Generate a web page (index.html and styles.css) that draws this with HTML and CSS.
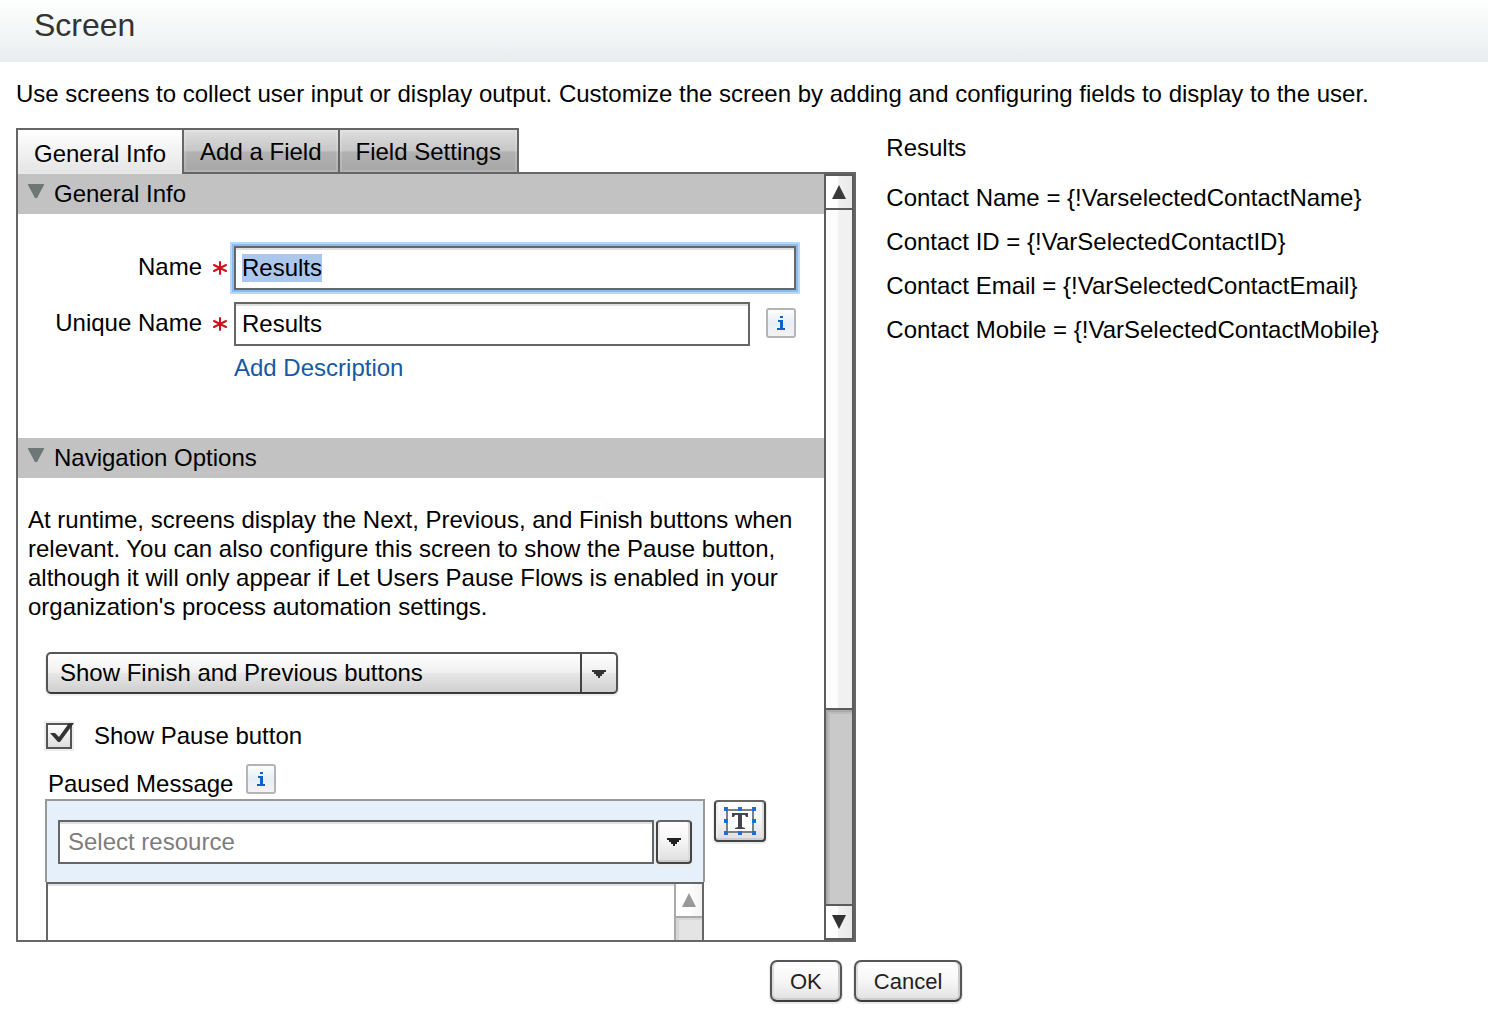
FILE: index.html
```
<!DOCTYPE html>
<html lang="en">
<head>
    <meta charset="UTF-8">
    <meta name="viewport" content="width=device-width, initial-scale=1.0">
    <title>Screen</title>
    <link rel="stylesheet" href="styles.css">
</head>
<body>
    <header class="dialog-header">
        <h1 class="dialog-title">Screen</h1>
    </header>

    <main class="dialog-body">
        <p class="intro">Use screens to collect user input or display output. Customize the screen by adding and configuring fields to display to the user.</p>

        <div class="columns">
            <div class="editor">
                <div class="tabs" role="tablist">
                    <button type="button" class="tab active" role="tab" aria-selected="true">General Info</button>
                    <button type="button" class="tab" role="tab" aria-selected="false">Add a Field</button>
                    <button type="button" class="tab" role="tab" aria-selected="false">Field Settings</button>
                </div>

                <div class="panel">
                    <div class="panel-content">
                        <h2 class="section-title">
                            <svg class="twisty" viewBox="0 0 16 14"><path d="M0 0h16v1L9 14H7L0 1z" fill="#6d7776"/></svg>
                            General Info
                        </h2>
                        <div class="general-form">
                            <div class="form-row">
                                <label for="name">Name <svg class="required" viewBox="0 0 14 14"><path d="M7 7V1M7 7v6M7 7L1 4M7 7l6-3M7 7l-6 3M7 7l6 3" stroke="#d0101c" stroke-width="2" stroke-linecap="round"/></svg></label>
                                <input type="text" id="name" class="text-input" value="Results" autofocus>
                            </div>
                            <div class="form-row">
                                <label for="unique-name">Unique Name <svg class="required" viewBox="0 0 14 14"><path d="M7 7V1M7 7v6M7 7L1 4M7 7l6-3M7 7l-6 3M7 7l6 3" stroke="#d0101c" stroke-width="2" stroke-linecap="round"/></svg></label>
                                <input type="text" id="unique-name" class="text-input" value="Results">
                                <button type="button" class="info-btn" aria-label="Unique name help">
                                    <svg viewBox="0 0 8 14"><path d="M3 0h3v2H3zM1 4h5v8h2v2H0v-2h3V6H1z" fill="#0b62cc"/></svg>
                                </button>
                            </div>
                            <a href="#" class="add-description">Add Description</a>
                        </div>

                        <h2 class="section-title">
                            <svg class="twisty" viewBox="0 0 16 14"><path d="M0 0h16v1L9 14H7L0 1z" fill="#6d7776"/></svg>
                            Navigation Options
                        </h2>
                        <div class="navigation-form">
                            <p class="help-text">At runtime, screens display the Next, Previous, and Finish buttons when relevant. You can also configure this screen to show the Pause button, although it will only appear if Let Users Pause Flows is enabled in your organization's process automation settings.</p>

                            <div class="select-box">
                                <select aria-label="Navigation buttons">
                                    <option>Show Finish and Previous buttons</option>
                                </select>
                                <span class="select-arrow">
                                    <svg class="caret" viewBox="0 0 14 8"><path d="M0 0h14v2h-2v2h-2v2H8v2H6V6H4V4H2V2H0z" fill="#333"/></svg>
                                </span>
                            </div>

                            <div class="check-row">
                                <span class="check-box">
                                    <input type="checkbox" id="show-pause" checked>
                                    <svg class="check-mark" viewBox="0 0 28 28"><path d="M4 10h5l4 4L23 0h5L14 19h-2z" fill="#333"/></svg>
                                </span>
                                <label for="show-pause">Show Pause button</label>
                            </div>

                            <div class="paused-label">
                                <label for="paused-message">Paused Message</label>
                                <button type="button" class="info-btn" aria-label="Paused message help">
                                    <svg viewBox="0 0 8 14"><path d="M3 0h3v2H3zM1 4h5v8h2v2H0v-2h3V6H1z" fill="#0b62cc"/></svg>
                                </button>
                            </div>

                            <div class="message-row">
                                <div class="message-editor">
                                    <div class="resource-bar">
                                        <input type="text" class="text-input" placeholder="Select resource" aria-label="Select resource">
                                        <button type="button" class="drop-btn" aria-label="Open resources">
                                            <svg class="caret" viewBox="0 0 14 8"><path d="M0 0h14v2h-2v2h-2v2H8v2H6V6H4V4H2V2H0z" fill="#222"/></svg>
                                        </button>
                                    </div>
                                    <div class="message-area">
                                        <textarea id="paused-message"></textarea>
                                        <div class="mini-scroll">
                                            <div class="mini-scroll-btn">
                                                <svg viewBox="0 0 14 14"><path d="M7 0l7 14H0z" fill="#999"/></svg>
                                            </div>
                                            <div class="mini-scroll-track"></div>
                                        </div>
                                    </div>
                                </div>
                                <button type="button" class="text-btn" aria-label="Toggle rich text">
                                    <svg viewBox="0 0 32 28">
                                        <rect x="3" y="3" width="26" height="22" fill="#fff" stroke="#7c8080" stroke-width="2"/>
                                        <path d="M8 6h16v4h-2l-1-2h-3v12l3 1v1H11v-1l3-1V8h-3l-1 2H8z" fill="#45454f"/>
                                        <path d="M0 0h4v4H0zM14 0h4v4h-4zM28 0h4v4h-4zM0 12h4v4H0zM28 12h4v4h-4zM0 24h4v4H0zM14 24h4v4h-4zM28 24h4v4h-4z" fill="#1672d8"/>
                                    </svg>
                                </button>
                            </div>
                        </div>
                    </div>

                    <div class="scrollbar">
                        <div class="scroll-btn">
                            <svg viewBox="0 0 14 14"><path d="M7 0l7 14H0z" fill="#3a3a3a"/></svg>
                        </div>
                        <div class="scroll-thumb"></div>
                        <div class="scroll-track"></div>
                        <div class="scroll-btn">
                            <svg viewBox="0 0 14 14"><path d="M0 0h14L7 14z" fill="#333"/></svg>
                        </div>
                    </div>
                </div>
            </div>

            <div class="preview">
                <p class="preview-title">Results</p>
                <p>Contact Name = {!VarselectedContactName}</p>
                <p>Contact ID = {!VarSelectedContactID}</p>
                <p>Contact Email = {!VarSelectedContactEmail}</p>
                <p>Contact Mobile = {!VarSelectedContactMobile}</p>
            </div>
        </div>
    </main>

    <footer class="dialog-footer">
        <button type="button" class="btn">OK</button>
        <button type="button" class="btn">Cancel</button>
    </footer>

    <script>
        // Start with the name ready to be replaced
        const nameInput = document.getElementById('name');
        nameInput.focus();
        nameInput.select();
    </script>
</body>
</html>
```

FILE: styles.css
```
* {
    box-sizing: border-box;
}

body {
    margin: 0;
    background: #fff;
    color: #000;
    font-family: "Liberation Sans", Arial, sans-serif;
    font-size: 24px;
    line-height: 28px;
}

h1, h2, p {
    margin: 0;
    font-weight: normal;
}

button, input, select, textarea {
    font: inherit;
    color: inherit;
    margin: 0;
}

svg {
    display: block;
    flex: none;
}

.dialog-header {
    height: 62px;
    padding: 7px 34px;
    background: linear-gradient(#fdfefe, #f3f6f6 55%, #e8ecee);
}

.dialog-title {
    font-size: 32px;
    line-height: 36px;
    color: #333;
}

.dialog-body {
    padding: 18px 16px 0;
}

.intro {
    margin-bottom: 20px;
}

.columns {
    display: grid;
    grid-template-columns: 33fr 23fr;
    gap: 30px;
}

/* Tabs */
.tabs {
    display: flex;
    position: relative;
    z-index: 1;
    margin-bottom: -2px;
}

.tab {
    height: 46px;
    margin-right: -2px;
    padding: 2px 16px 0;
    border: 2px solid #666;
    background: linear-gradient(#dedede, #c6c6c6 50%, #b2b2b2 52%, #a6a6a6);
    box-shadow: inset 0 0 0 2px rgba(255, 255, 255, 0.15);
}

.tab.active {
    padding-top: 4px;
    border-bottom: 0;
    background: linear-gradient(#fff, #e4e4e4);
}

/* Panel */
.panel {
    display: flex;
    height: calc(100vh - 242px);
    border: 2px solid #666;
}

.panel-content {
    flex: 1;
    min-width: 0;
    overflow: hidden;
}

.section-title {
    display: flex;
    gap: 10px;
    height: 40px;
    padding: 6px 10px;
    background: #c2c2c2;
    font-size: 24px;
}

.twisty {
    width: 16px;
    height: 14px;
    margin-top: 4px;
}

.general-form {
    height: 224px;
    padding: 32px 28px 0 0;
}

.form-row {
    display: flex;
    align-items: center;
    margin-bottom: 12px;
}

.form-row:nth-child(2) {
    margin-bottom: 8px;
}

.form-row label {
    display: flex;
    align-items: center;
    justify-content: flex-end;
    gap: 11px;
    width: 216px;
    padding: 0 7px 2px 0;
}

.required {
    width: 14px;
    height: 14px;
    margin-top: 2px;
}

.text-input {
    flex: 1;
    min-width: 0;
    height: 44px;
    padding: 0 6px;
    border: 2px solid #666;
    background: #fff;
    box-shadow: inset 0 2px #e0e0e0;
    outline: none;
}

.text-input:focus {
    box-shadow: inset 0 2px #e0e0e0, 0 0 0 2px #86bcf0, 0 0 0 4px #b9d8f8;
}

.text-input::selection {
    background: #abc7ec;
    color: #000;
}

.text-input::placeholder {
    color: #7d7d7d;
}

.info-btn {
    display: flex;
    align-items: center;
    justify-content: center;
    width: 30px;
    height: 30px;
    padding: 0;
    border: 2px solid #b4b4b4;
    border-radius: 3px;
    background: linear-gradient(#fdfdfd, #e8eef5 50%, #f3f3f3);
}

.info-btn svg {
    width: 8px;
    height: 14px;
}

.form-row .info-btn {
    margin: 0 0 2px 16px;
}

.add-description {
    display: block;
    margin-left: 216px;
    color: #1659a5;
    text-decoration: none;
}

/* Navigation options */
.navigation-form {
    padding: 27px 28px 0;
}

.help-text {
    margin: 0 0 31px -18px;
    line-height: 29px;
}

.select-box {
    position: relative;
    width: 572px;
    max-width: 100%;
    height: 42px;
}

.select-box select {
    width: 100%;
    height: 100%;
    padding: 0 48px 0 12px;
    appearance: none;
    border: 2px solid #555;
    border-bottom-color: #3a3a3a;
    border-radius: 5px;
    background: linear-gradient(#fff, #f0f0f0 48%, #e6e6e6 52%, #cfcfcf);
    box-shadow: 0 1px 1px 1px #eee;
}

.select-arrow {
    display: flex;
    align-items: center;
    justify-content: center;
    position: absolute;
    top: 2px;
    right: 2px;
    bottom: 2px;
    width: 36px;
    padding-top: 2px;
    border-left: 2px solid #444;
    pointer-events: none;
}

.caret {
    width: 14px;
    height: 8px;
}

.check-row {
    display: flex;
    align-items: center;
    gap: 22px;
    margin-top: 28px;
}

.check-box {
    position: relative;
    width: 26px;
    height: 26px;
}

.check-box input {
    display: block;
    width: 26px;
    height: 26px;
    appearance: none;
    border: 2px solid #555;
    background: linear-gradient(#fff, #ddd);
    box-shadow: 0 0 0 2px #eee;
}

.check-mark {
    display: none;
    position: absolute;
    top: 0;
    left: 0;
    width: 28px;
    height: 28px;
    pointer-events: none;
}

.check-box input:checked + .check-mark {
    display: block;
}

.paused-label {
    display: flex;
    align-items: flex-start;
    gap: 13px;
    height: 35px;
    margin: 14px 0 0 2px;
}

.paused-label label {
    padding-top: 6px;
}

.message-row {
    display: flex;
    align-items: flex-start;
    gap: 9px;
}

.message-editor {
    width: 660px;
    margin-left: -1px;
}

.resource-bar {
    display: flex;
    gap: 2px;
    height: 83px;
    padding: 19px 11px 0;
    border: 2px solid #999;
    border-bottom: 0;
    background: #e6f0fb;
}

.resource-bar .text-input {
    padding: 0 8px;
}

.drop-btn,
.text-btn {
    display: flex;
    align-items: center;
    justify-content: center;
    padding: 0;
    border: 2px solid #444;
    border-top-color: #666;
    border-radius: 4px;
    background: linear-gradient(#fff, #f4f4f4 50%, #dedede);
    box-shadow: inset 0 -2px #ccc, inset 2px 0 #eee, inset -2px 0 #ddd, 0 1px 1px 1px #eaeaea;
}

.drop-btn {
    width: 36px;
    height: 44px;
}

.text-btn {
    width: 52px;
    height: 42px;
    margin-top: 1px;
}

.text-btn svg {
    width: 32px;
    height: 28px;
}

.message-area {
    display: flex;
    height: 160px;
    margin: 0 1px;
    border: 2px solid #666;
}

.message-area textarea {
    flex: 1;
    padding: 6px;
    border: 0;
    background: #fff;
    box-shadow: inset 0 2px #e0e0e0;
    outline: none;
    resize: none;
}

.mini-scroll {
    display: flex;
    flex-direction: column;
    width: 28px;
    border-left: 2px solid #aaa;
}

.mini-scroll-btn {
    display: flex;
    align-items: center;
    justify-content: center;
    height: 34px;
    border-bottom: 2px solid #aaa;
    background: linear-gradient(90deg, #fff 45%, #f2f2f2);
}

.mini-scroll-btn svg {
    width: 14px;
    height: 14px;
}

.mini-scroll-track {
    flex: 1;
    background: #e4e4e4;
    box-shadow: inset 3px 2px #d6d6d6;
}

/* Panel scrollbar */
.scrollbar {
    display: flex;
    flex-direction: column;
    width: 30px;
    border: 2px solid #5c5c5c;
}

.scroll-btn {
    display: flex;
    align-items: center;
    justify-content: center;
    height: 32px;
    background: linear-gradient(90deg, #fff 45%, #f2f2f2 46%, #e8e8e8);
}

.scroll-btn svg {
    width: 14px;
    height: 14px;
}

.scroll-thumb {
    flex: 18;
    border: solid #5c5c5c;
    border-width: 2px 0;
    background: linear-gradient(90deg, #fcfcfc 45%, #f1f1f1 46%);
}

.scroll-track {
    flex: 7;
    border-bottom: 2px solid #5c5c5c;
    background: #c9c9c9;
    box-shadow: inset 2px 2px #aaa, inset 4px 4px #bbb;
}

/* Preview */
.preview {
    padding-top: 6px;
}

.preview p {
    line-height: 44px;
}

.preview .preview-title {
    margin-bottom: 14px;
    line-height: 28px;
}

.dialog-footer {
    display: flex;
    gap: 12px;
    padding: 18px 0 8px calc(50% + 26px);
}

.btn {
    height: 42px;
    padding: 2px 18px 0;
    border: 2px solid #555;
    border-bottom-color: #3c3c3c;
    border-radius: 7px;
    background: linear-gradient(#fff, #f6f6f6 50%, #e2e2e2);
    box-shadow: inset 0 -2px #ccc, inset 2px 0 #ddd, inset -2px 0 #ccc, 0 1px 1px 1px #eaeaea;
    color: #222;
    font-size: 22px;
}
```
